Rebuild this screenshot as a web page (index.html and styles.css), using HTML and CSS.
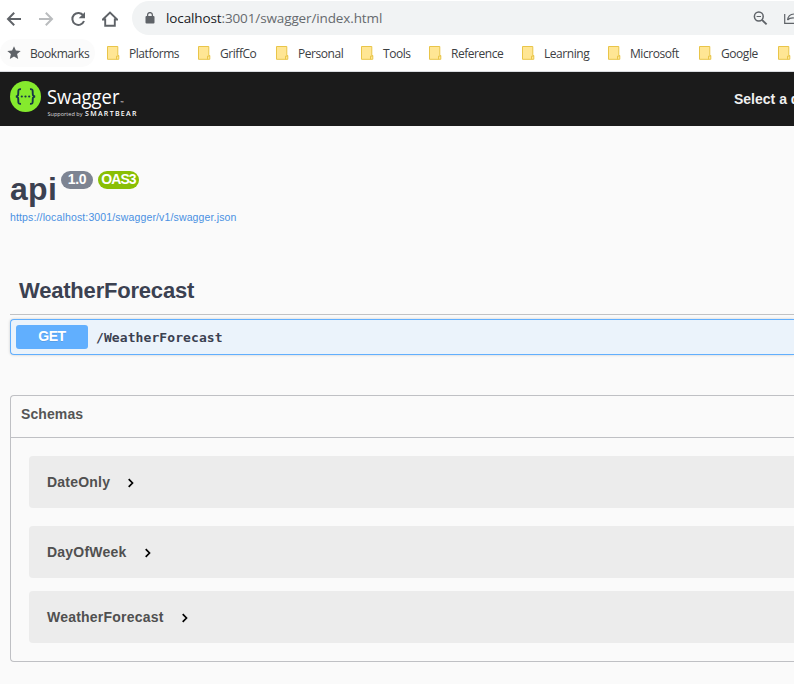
FILE: index.html
```html
<!DOCTYPE html>
<html lang="en">
<head>
<meta charset="utf-8">
<title>Swagger UI</title>
<link rel="stylesheet" href="styles.css">
</head>
<body>
<svg width="0" height="0" class="defs">
  <symbol id="folder" viewBox="0 0 13 14"><path d="M.5.5h10.300v9h1v3.800H.5z" fill="#ffe694" stroke="#e9c549"/><path d="M9.500 13.300v-3.200h2.200" fill="none" stroke="#e9c549"/></symbol>
  <symbol id="chevron" viewBox="0 0 8 10"><path d="M1.700 1.200 5.500 5 1.700 8.800" fill="none" stroke="#000" stroke-width="1.700"/></symbol>
</svg>
<div class="toolbar">
  <div class="nav">
    <svg width="16" height="16" viewBox="0 0 16 16" fill="none" stroke="#5f6368" stroke-width="2"><path d="M15 8H2.500M8.200 1.700 2 8l6.200 6.300"/></svg>
    <svg width="16" height="16" viewBox="0 0 16 16" fill="none" stroke="#babcbe" stroke-width="2"><path d="M1 8h12.500M7.800 1.700 14 8l-6.200 6.300"/></svg>
    <svg width="16" height="16" viewBox="0 0 16 16"><path d="M13.300 4.500A6 6 0 1 0 14 10" fill="none" stroke="#5f6368" stroke-width="2"/><path d="M15 1v6.300H8.700z" fill="#5f6368"/></svg>
    <svg width="16" height="16" viewBox="0 0 16 16"><path d="M.8 8.500 8 1.600l7.200 6.900h-2.400v6.300H3.200V8.500z" fill="none" stroke="#5f6368" stroke-width="1.900"/></svg>
  </div>
  <div class="omnibox">
    <svg width="10" height="12" viewBox="0 0 10 12"><rect x=".5" y="4" width="9" height="7.500" rx="1" fill="#5f6368"/><path d="M2.600 4.500V3a2.400 2.400 0 0 1 4.800 0v1.500" fill="none" stroke="#5f6368" stroke-width="1.300"/></svg>
    <span class="url"><b>localhost</b>:3001/swagger/index.html</span>
    <svg class="lens" width="15" height="15" viewBox="0 0 15 15" fill="none" stroke="#5f6368"><circle cx="5.800" cy="5.500" r="4.400" stroke-width="1.500"/><path d="M9 8.800 13.600 13.400" stroke-width="1.900"/><path d="M3.600 5.500H8" stroke-width="1.200"/></svg>
    <svg class="share" width="10" height="14" viewBox="0 0 10 14" fill="none" stroke="#5f6368" stroke-width="1.200"><path d="M.7 3v9.400H10M3.500 9C4 5 6 3.300 10 3M3.500 9C5 7.300 7 6.800 10 7"/></svg>
  </div>
</div>
<div class="bookmarks">
  <div class="bm first"><svg width="14" height="14" viewBox="0 0 14 14"><path d="m7 .3 1.900 4.300 4.800.4-3.600 3.100 1.100 4.900L7 10.500 2.800 13l1.100-4.900L.3 5l4.800-.4z" fill="#5f6368"/></svg><span>Bookmarks</span></div>
  <div class="bm"><svg width="13" height="14"><use href="#folder"/></svg><span>Platforms</span></div>
  <div class="bm"><svg width="13" height="14"><use href="#folder"/></svg><span>GriffCo</span></div>
  <div class="bm"><svg width="13" height="14"><use href="#folder"/></svg><span>Personal</span></div>
  <div class="bm"><svg width="13" height="14"><use href="#folder"/></svg><span>Tools</span></div>
  <div class="bm"><svg width="13" height="14"><use href="#folder"/></svg><span>Reference</span></div>
  <div class="bm"><svg width="13" height="14"><use href="#folder"/></svg><span>Learning</span></div>
  <div class="bm"><svg width="13" height="14"><use href="#folder"/></svg><span>Microsoft</span></div>
  <div class="bm"><svg width="13" height="14"><use href="#folder"/></svg><span>Google</span></div>
  <div class="bm"><svg width="13" height="14"><use href="#folder"/></svg></div>
</div>
<header class="topbar">
  <svg class="logo" width="130" height="40" viewBox="0 0 130 40">
    <circle cx="15.500" cy="15.500" r="15.500" fill="#85ea2d"/>
    <g fill="none" stroke="#173647" stroke-width="1.900"><path d="M11 8.200C8.500 8 8.300 9 8.300 11c0 3 .1 4.500-2.500 4.500 2.600 0 2.500 1.500 2.500 4.500 0 2 .2 3 2.700 2.800M20 8.200c2.500-.2 2.700.8 2.700 2.800 0 3-.1 4.500 2.500 4.500-2.600 0-2.500 1.500-2.500 4.500 0 2-.2 3-2.700 2.800"/></g>
    <g fill="#173647"><circle cx="11.800" cy="15.500" r="1.100"/><circle cx="15.500" cy="15.500" r="1.100"/><circle cx="19.200" cy="15.500" r="1.100"/></g>
    <text x="37" y="22.500" class="brand" textLength="72.500" lengthAdjust="spacingAndGlyphs">Swagger</text>
    <text x="110.500" y="22.500" class="tm">™</text>
    <text x="37.500" y="34.500" class="by" textLength="35" lengthAdjust="spacingAndGlyphs">Supported by</text>
    <text x="75" y="34.500" class="bear" textLength="51.500">SMARTBEAR</text>
  </svg>
  <span class="select">Select a definition</span>
</header>
<main>
  <div class="title"><h1>api</h1><span class="pill ver">1.0</span><span class="pill oas">OAS3</span></div>
  <a class="spec">https://localhost:3001/swagger/v1/swagger.json</a>
  <h2>WeatherForecast</h2>
  <div class="op"><span class="method">GET</span><span class="path">/WeatherForecast</span></div>
  <section class="schemas">
    <h3>Schemas</h3>
    <div class="model"><span>DateOnly</span><svg width="8" height="10"><use href="#chevron"/></svg></div>
    <div class="model"><span>DayOfWeek</span><svg width="8" height="10"><use href="#chevron"/></svg></div>
    <div class="model last"><span>WeatherForecast</span><svg width="8" height="10"><use href="#chevron"/></svg></div>
  </section>
</main>
</body>
</html>
```
FILE: styles.css
```css
* { box-sizing: border-box; }
body { margin: 0; width: 794px; height: 684px; overflow: hidden; background: #fafafa; font-family: "Liberation Sans", Arial, sans-serif; color: #3b4151; }
.defs { position: absolute; }
svg { display: block; flex: none; }
h1, h2, h3 { margin: 0; }

.toolbar { display: flex; height: 36px; background: #fff; padding-top: 1px; }
.nav { display: flex; align-items: center; gap: 16px; width: 132px; padding-left: 6px; flex: none; }
.omnibox { display: flex; align-items: center; flex: 1; height: 34px; padding-left: 13px; background: #f1f3f4; border-radius: 17px 0 0 17px; overflow: hidden; }
.url { margin-left: 11px; font: 13.500px/20px "Open Sans", sans-serif; letter-spacing: -.12px; color: #666a6e; white-space: nowrap; width: 588px; }
.url b { font-weight: 400; color: #202124; }
.share { margin-left: 16px; }

.bookmarks { display: grid; grid-template-columns: 95px 91px 78px 85px 68px 93px 86px 91px 79px 24px; height: 36px; padding: 2px 0 0 0; background: #fff; border-bottom: 1px solid #dadce0; font: 12px/16px "Open Sans", sans-serif; letter-spacing: -.45px; color: #3c4043; overflow: hidden; }
.bm { display: flex; align-items: center; height: 30px; gap: 9px; padding-left: 12px; white-space: nowrap; }
.bm span { padding-top: 1px; }
.bm.first { padding-left: 7px; background: #fbfbfb; border-radius: 14px; height: 28px; margin-top: 1px; }

.topbar { display: flex; justify-content: space-between; height: 54px; background: #1b1b1b; padding: 9px 0 0 10px; overflow: hidden; }
.select { width: 60px; font: bold 14px/18px "Liberation Sans", sans-serif; padding-top: 9px; color: #f0f0f0; white-space: nowrap; }
.logo text { fill: #fff; font-family: "Open Sans", sans-serif; }
.logo .brand { font-size: 20.500px; font-weight: 400; }
.logo .tm { font-size: 4px; }
.logo .by { font-size: 6px; fill: #ddd; }
.logo .bear { font-size: 7px; font-weight: 600; }

main { padding: 42px 0 0 10px; }
.title { display: flex; align-items: flex-start; height: 42px; }
h1 { font-size: 32px; line-height: 42px; width: 51px; letter-spacing: .3px; }
.pill { height: 18px; border-radius: 9px; margin-top: 3px; color: #fff; font: bold 14px/17px "Liberation Sans", sans-serif; text-align: center; }
.ver { width: 32px; background: #7d8492; letter-spacing: -.3px; }
.oas { width: 41px; margin-left: 5px; background: #89bf04; letter-spacing: -.9px; }
.spec { display: block; font-size: 10.500px; line-height: 14px; letter-spacing: .14px; color: #4990e2; white-space: nowrap; }
h2 { height: 91px; padding: 54px 0 0 9px; font-size: 22px; line-height: 26px; letter-spacing: -.2px; border-bottom: 1px solid #c1c2c4; }
.op { display: flex; align-items: center; height: 36px; margin-top: 4px; padding-left: 5px; border: 1px solid #61affe; border-right: 0; border-radius: 4px 0 0 4px; background: #ebf3fb; box-shadow: 0 0 3px rgba(0,0,0,.19); }
.method { width: 72px; height: 24px; border-radius: 3px; background: #61affe; color: #fff; font-size: 14px; font-weight: 700; line-height: 22px; letter-spacing: -.5px; text-align: center; text-shadow: 0 1px 0 rgba(0,0,0,.1); }
.path { margin-left: 8px; padding-top: 2px; font: bold 13px/18px "DejaVu Sans Mono", monospace; letter-spacing: .09px; }
.schemas { height: 267px; margin-top: 40px; border: 1px solid #bfc0c4; border-right: 0; border-radius: 4px 0 0 4px; }
h3 { height: 42px; padding: 9px 10px; border-bottom: 1px solid #bfc0c4; font-size: 14px; line-height: 18px; color: #555; letter-spacing: .1px; }
.model { display: flex; align-items: center; height: 52px; margin: 18px 0 0 18px; padding-left: 18px; border-radius: 4px 0 0 4px; background: #ececec; font-size: 14px; font-weight: 700; color: #505050; letter-spacing: .22px; }
.model svg { margin: 2px 0 0 17px; }
.model.last { margin-top: 13px; }
```
